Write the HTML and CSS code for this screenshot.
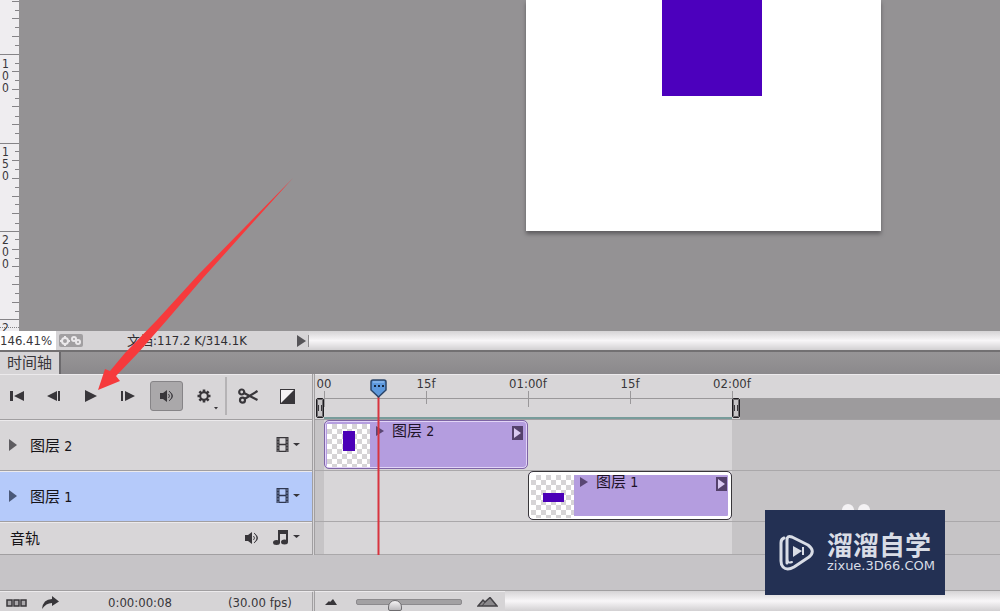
FILE: index.html
```
<!DOCTYPE html>
<html lang="zh-CN">
<head>
<meta charset="utf-8">
<title>时间轴</title>
<link rel="stylesheet" href="styles.css">
</head>
<body>
<main class="app">
  <section class="workspace">
    <svg class="v-ruler" width="19" height="331" viewBox="0 0 19 331" aria-hidden="true">
      <path class="tick" d="M0 54.500H19M0 143.500H19M0 231.500H19M0 319.500H19"/>
      <path class="tick" d="M12 1.500h7M12 18.500h7M12 36.500h7M12 71.500h7M12 89.500h7M12 106.500h7M12 124.500h7M12 160.500h7M12 178.500h7M12 196.500h7M12 213.500h7M12 249.500h7M12 266.500h7M12 284.500h7M12 302.500h7"/>
      <path class="tick" d="M15 10.500h4M15 27.500h4M15 45.500h4M15 63.500h4M15 80.500h4M15 98.500h4M15 116.500h4M15 133.500h4M15 151.500h4M15 169.500h4M15 187.500h4M15 204.500h4M15 223.500h4M15 239.500h4M15 258.500h4M15 276.500h4M15 293.500h4M15 311.500h4"/>
      <path class="dots" d="M0 327.500H19"/>
      <g class="ruler-text">
        <text x="2" y="68">1</text><text x="2" y="80">0</text><text x="2" y="92">0</text>
        <text x="2" y="156">1</text><text x="2" y="168">5</text><text x="2" y="180">0</text>
        <text x="2" y="244">2</text><text x="2" y="256">0</text><text x="2" y="268">0</text>
        <text x="2" y="332">2</text>
      </g>
    </svg>
    <div class="canvas">
      <div class="artboard"><div class="shape"></div></div>
    </div>
  </section>

  <div class="status">
    <input class="zoom-value" value="146.41%" aria-label="缩放">
    <svg class="status-icon" width="24" height="13" viewBox="0 0 24 13"><rect width="24" height="13" rx="2" fill="#a19fa1"/><circle cx="6" cy="7" r="3" fill="none" stroke="#ebe9eb" stroke-width="2"/><path d="M6 2v2M6 10v2M1 7h2M9 7h2" stroke="#ebe9eb" stroke-width="2"/><circle cx="15" cy="5" r="2" fill="none" stroke="#ebe9eb" stroke-width="2"/><circle cx="19" cy="8" r="2" fill="none" stroke="#ebe9eb" stroke-width="2"/></svg>
    <span class="doc-size">文档:117.2 K/314.1K</span>
    <button class="status-more" aria-label="状态选项"><svg width="9" height="12"><path d="M0 0L9 6L0 12Z" fill="#565458"/></svg></button>
    <div class="h-scroll"></div>
  </div>

  <nav class="tabs"><button class="tab">时间轴</button></nav>

  <section class="timeline">
    <div class="heads">
      <div class="toolbar">
        <button class="tool" aria-label="第一帧"><svg width="14" height="10"><path d="M0 0h3v10H0zM14 0v10L4 5z"/></svg></button>
        <button class="tool" aria-label="上一帧"><svg width="14" height="10"><path d="M10 0v10L0 5zM11 0h2v10h-2z"/></svg></button>
        <button class="tool" aria-label="播放"><svg width="12" height="12"><path d="M0 0L12 6L0 12z"/></svg></button>
        <button class="tool" aria-label="下一帧"><svg width="14" height="10"><path d="M0 0h2v10H0zM4 0L14 5L4 10z"/></svg></button>
        <button class="tool sound" aria-label="声音"><svg width="14" height="12" viewBox="0 0 14 12"><path d="M0 3h3l4-3v12L3 9H0z"/><path class="line" d="M8.500 4q2 2 0 4M10 2q4 4 0 8M9 1q7 5 0 10"/></svg></button>
        <button class="tool gear" aria-label="设置"><svg width="28" height="28" viewBox="0 0 28 28"><circle cx="14" cy="14" r="3.800" fill="none" stroke="#38363a" stroke-width="2"/><path d="M14 7.500v3M14 17.500v3M7.500 14h3M17.500 14h3M9.400 9.400l2 2M16.600 16.600l2 2M18.600 9.400l-2 2M11.400 16.600l-2 2" stroke="#38363a" stroke-width="2.600"/><path d="M24 25h4l-2 2.500z"/></svg></button>
        <i class="divider"></i>
        <button class="tool scissors" aria-label="拆分"><svg width="20" height="16" viewBox="0 0 20 16"><g fill="none" stroke="#38363a" stroke-width="2.200"><circle cx="3.700" cy="4" r="2.500"/><circle cx="4.500" cy="12.200" r="2.500"/><path d="M6 5l13.500 7M6.500 11L19.500 3"/></g></svg></button>
        <button class="tool fade" aria-label="过渡"><svg width="15" height="15"><rect x=".5" y=".5" width="14" height="14" fill="#f4f2f4" stroke="#38363a"/><path d="M15 0v15H0z"/></svg></button>
      </div>
      <div class="head">
        <svg class="twisty" width="9" height="12"><path d="M0 0L8 6L0 12Z" fill="#5e5c60"/></svg>
        <span class="name">图层 <b class="num">2</b></span>
        <button class="menu" aria-label="视频选项"><svg width="24" height="15" viewBox="0 0 24 15"><path d="M2 0v15M11 0v15" stroke="#38363a" stroke-width="3"/><path d="M2 1.500v13M11 1.500v13" stroke="#c9c7c9" stroke-dasharray="1 2"/><path d="M3 .5h7M3 7.500h7M3 14.500h7" stroke="#38363a" stroke-width="1.500"/><path d="M17 6h7l-3.500 3z"/></svg></button>
      </div>
      <div class="head selected">
        <svg class="twisty" width="9" height="12"><path d="M0 0L8 6L0 12Z" fill="#4a5878"/></svg>
        <span class="name">图层 <b class="num">1</b></span>
        <button class="menu" aria-label="视频选项"><svg width="24" height="15" viewBox="0 0 24 15"><path d="M2 0v15M11 0v15" stroke="#303850" stroke-width="3"/><path d="M2 1.500v13M11 1.500v13" stroke="#b5cafa" stroke-dasharray="1 2"/><path d="M3 .5h7M3 7.500h7M3 14.500h7" stroke="#303850" stroke-width="1.500"/><path d="M17 6h7l-3.500 3z"/></svg></button>
      </div>
      <div class="head audio">
        <span class="name">音轨</span>
        <button class="menu" aria-label="静音"><svg width="14" height="12" viewBox="0 0 14 12"><path d="M0 3h3l4-3v12L3 9H0z"/><path class="line" d="M8.500 4q2 2 0 4M10 2q4 4 0 8M9 1q7 5 0 10"/></svg></button>
        <button class="menu" aria-label="音频选项"><svg width="27" height="15" viewBox="0 0 27 15"><path d="M5 0h10v12h-2V4H7v9H5z"/><ellipse cx="3.500" cy="12.500" rx="3.500" ry="2.500"/><ellipse cx="11.500" cy="12" rx="3.500" ry="2.500"/><path d="M20 5h7l-3.500 3z"/></svg></button>
      </div>
    </div>

    <div class="tracks">
      <ol class="scale"><li>00</li><li class="half">15f</li><li>01:00f</li><li class="half">15f</li><li>02:00f</li></ol>
      <div class="work-area">
        <button class="handle" aria-label="工作区开始"></button>
        <div class="range"></div>
        <button class="handle" aria-label="工作区结束"></button>
        <div class="outside"></div>
      </div>
      <div class="track">
        <div class="clip first">
          <svg class="thumb" width="43" height="43"><defs><pattern id="checks" width="10" height="10" patternUnits="userSpaceOnUse"><rect width="10" height="10" fill="#fff"/><path d="M5 0h5v5H5zM0 5h5v5H0z" fill="#d6d4d6"/></pattern></defs><rect width="43" height="43" fill="url(#checks)"/><rect x="16" y="7" width="12" height="20" fill="#4b00b8"/></svg>
          <svg class="clip-twisty" width="8" height="10"><path d="M0 0L8 5L0 10Z" fill="#594673"/></svg>
          <span class="clip-name">图层 <b class="num">2</b></span>
          <svg class="clip-end" width="11" height="14"><rect width="11" height="14" fill="#54416c"/><path d="M2 2l7 5l-7 5z" fill="#d9c9f1"/></svg>
        </div>
      </div>
      <div class="track">
        <div class="clip second">
          <svg class="thumb" width="43" height="43"><rect width="43" height="43" fill="url(#checks)"/><rect x="12" y="18" width="21" height="9" fill="#4b00b8"/></svg>
          <svg class="clip-twisty" width="8" height="10"><path d="M0 0L8 5L0 10Z" fill="#594673"/></svg>
          <span class="clip-name">图层 <b class="num">1</b></span>
          <svg class="clip-end" width="11" height="14"><rect width="11" height="14" fill="#54416c"/><path d="M2 2l7 5l-7 5z" fill="#d9c9f1"/></svg>
        </div>
      </div>
      <div class="track audio"></div>
      <svg class="playhead" width="17" height="176" viewBox="0 0 17 176"><path d="M8.500 17V176" stroke="#d8343f" stroke-width="2"/><path d="M1 3Q1 1 3 1H14Q16 1 16 3V11L8.500 18L1 11Z" fill="#5d98dc" stroke="#2b4568" stroke-width="1.500"/><path d="M3 3h11" stroke="#9dc5f2"/><path d="M4 7h2M8 7h2M12 7h2" stroke="#15273f" stroke-width="2"/></svg>
    </div>
  </section>

  <div class="spare"></div>

  <footer class="bottom">
    <div class="controls">
      <button class="frames" aria-label="转换为帧动画"><svg width="21" height="8"><path d="M1 1h5v6H1zM8 1h5v6H8zM15 1h5v6h-5z" fill="#a9a7aa" stroke="#38363a" stroke-width="1.500"/></svg></button>
      <button class="render" aria-label="渲染视频"><svg width="17" height="13" viewBox="0 0 17 13"><path d="M0 13Q1 3 10 3V0L17 5.500L10 10V7Q4 7 0 13Z"/></svg></button>
      <span class="time">0:00:00:08</span>
      <span class="fps">(30.00 fps)</span>
    </div>
    <div class="zoom">
      <svg width="12" height="6"><path d="M0 6l4-4 1 1 3-3 4 6z"/></svg>
      <input class="slider" type="range" min="0" max="100" value="35" aria-label="时间轴缩放">
      <svg width="21" height="10"><path d="M1 9l5-6 2 2 5-4.500 7 8.500z" fill="#8b898c" stroke="#454347" stroke-width="1.500"/><path d="M5 9l4-5" stroke="#454347"/></svg>
    </div>
    <div class="h-scroll"></div>
  </footer>

  <svg class="pointer" width="200" height="216" viewBox="0 0 200 216" aria-hidden="true"><path d="M198 1L104 97L62 143L30 176L15 194L10 192L3 213L25 204L21 199L43 176L72 143L108 101Z" fill="#f63a3c"/></svg>

  <aside class="brand">
    <i class="bump"></i><i class="bump right"></i>
    <svg width="36" height="38" viewBox="0 0 36 38"><g fill="none" stroke="#d9dde6" stroke-width="3" stroke-linecap="round" stroke-linejoin="round"><path d="M8 29V6Q8 1 13 3L29 11Q37 17 30 23L15 33Q8 37 4 33Q2 31 2 27V9Q2 5 5 4"/><path d="M8 24Q8 30 13 28" stroke-width="2"/></g><path d="M14 12l9 5-9 6z" fill="#d9dde6"/><path d="M24 13v8" stroke="#d9dde6" stroke-width="2"/></svg>
    <div class="brand-text"><strong>溜溜自学</strong><span>zixue.3D66.COM</span></div>
  </aside>
</main>
</body>
</html>
```
FILE: styles.css
```
* { box-sizing: border-box; }

body {
  margin: 0;
  background: #c6c4c7;
  color: #38363a;
  font: 13px/16px "DejaVu Sans Condensed", "Noto Sans CJK SC", sans-serif;
}

button {
  padding: 0;
  border: 0;
  background: none;
  color: inherit;
  font: inherit;
}

svg { display: block; flex: none; fill: #38363a; }

.app {
  position: relative;
  display: flex;
  flex-direction: column;
  min-height: 100vh;
  overflow: hidden;
}

/* Document window */
.workspace { display: flex; flex: 1; min-height: 331px; background: #949294; }
.v-ruler { background: #efedf0; }
.tick { stroke: #858387; }
.dots { stroke: #858387; stroke-dasharray: 1 1; }
.ruler-text { font-size: 12px; fill: #38363a; }
.canvas { position: relative; flex: 1; overflow: hidden; }
.artboard {
  position: absolute;
  top: 0;
  left: 507px;
  width: 355px;
  height: 231px;
  background: #fff;
  box-shadow: 0 3px 4px #5f5d60;
}
.shape { width: 100px; height: 96px; margin-left: 136px; background: #4c00bd; }

/* Status bar */
.status {
  display: flex;
  align-items: center;
  height: 21px;
  border-bottom: 2px solid #727072;
  background: #d6d4d6;
}
.zoom-value {
  width: 56px;
  height: 19px;
  padding: 0;
  border: 0;
  background: #fff;
  color: #38363a;
  font: inherit;
}
.status-icon { margin-left: 3px; }
.doc-size { flex: none; width: 170px; margin-left: 44px; color: #2f2d31; }
.status-more { width: 12px; border-right: 1px solid #8e8c8e; }
.h-scroll {
  flex: 1;
  align-self: stretch;
  background: linear-gradient(#d5d3d5, #f8f6f8 50%, #d2d0d2);
}

/* Panel tabs */
.tabs { display: flex; height: 22px; background: linear-gradient(#979597, #8b898c); }
.tab {
  width: 61px;
  border-right: 2px solid #6c6a6d;
  background: #d6d4d6;
  font-size: 15px;
}

/* Timeline */
.timeline { display: flex; background: #d8d6d8; }
.heads { width: 315px; flex: none; border-right: 3px double #a19fa1; }
.toolbar {
  display: flex;
  align-items: center;
  gap: 7px;
  height: 46px;
  padding: 0 0 2px 2px;
  border-top: 1px solid #eceaec;
  border-bottom: 1px solid #a19fa1;
}
.tool { display: flex; align-items: center; justify-content: center; width: 30px; height: 30px; }
.tool.sound {
  width: 33px;
  border: 1px solid #868487;
  border-radius: 3px;
  background: #aaa8aa;
}
.tool.gear, .tool.scissors { width: 28px; }
.tool.fade { width: 36px; }
.line { fill: none; stroke: #454347; }
.divider { width: 2px; height: 38px; background: #b5b3b5; }
.head {
  display: flex;
  align-items: center;
  gap: 12px;
  height: 51px;
  padding: 0 12px 2px 9px;
  border-top: 1px solid #eceaec;
  border-bottom: 1px solid #a19fa1;
}
.head.selected { background: #b5cafa; color: #18204a; }
.head.audio { height: 33px; padding-left: 10px; gap: 14px; }
.name { flex: 1; padding-top: 2px; color: #151317; font-size: 15px; }
.num { font-size: 14px; font-weight: normal; }

.tracks {
  position: relative;
  flex: 1;
  min-width: 0;
  overflow: hidden;
  background: linear-gradient(90deg, #c6c4c6 9px, #d8d6d8 9px 417px, #c6c4c6 417px);
}
.scale {
  display: flex;
  height: 24px;
  margin: 0;
  padding: 1px 0 0;
  border-top: 1px solid #eceaec;
  background: #d8d6d8;
  list-style: none;
}
.scale li { position: relative; width: 102px; flex: none; text-align: center; }
.scale li:first-child { margin-left: -42px; }
.scale li::after {
  position: absolute;
  top: 15px;
  left: 51px;
  width: 1px;
  height: 16px;
  background: #9a989a;
  content: "";
}
.scale .half::after { height: 13px; }
.work-area { display: flex; height: 22px; padding-left: 1px; border-bottom: 1px solid #a19fa1; background: #d8d6d8; }
.handle {
  width: 8px;
  height: 20px;
  border: 1px solid #1c1a1e;
  border-radius: 2px;
  background: linear-gradient(90deg, #38363a 1px, #c6c4c6 1px 3px, #38363a 3px) center / 4px 6px no-repeat #c6c4c6;
  outline: 1px solid #6c6a6d;
  outline-offset: -2px;
  z-index: 1;
}
.range { width: 408px; border-top: 1px solid #9a989a; border-bottom: 2px solid #789c9b; }
.outside { flex: 1; background: #9d9b9d; }
.track {
  display: grid;
  grid-template-columns: 204px 204px;
  height: 51px;
  padding-left: 9px;
  border-bottom: 1px solid #aaa8aa;
}
.track.audio { height: 33px; }
.clip {
  display: flex;
  align-items: flex-start;
  height: 49px;
  padding: 2px;
  border: 1px solid #7e64a5;
  border-radius: 5px;
  background: #b49ddf;
  box-shadow: inset 0 0 0 1px #e2d5f7;
}
.clip.second {
  grid-column: 2;
  border-color: #38363a;
  box-shadow: inset 0 0 0 3px #fff;
}
.thumb { margin-top: 1px; }
.clip-twisty { margin: 3px 0 0 6px; }
.clip-name { flex: 1; margin-left: 8px; color: #1e1328; font-size: 15px; }
.clip-end { margin: 3px 2px 0 0; }
.playhead { position: absolute; top: 5px; left: 55px; }

.spare { height: 35px; background: #c6c4c7; }

/* Bottom bar */
.bottom { display: flex; height: 21px; border-top: 1px solid #a19fa1; background: #d6d4d6; }
.controls {
  display: flex;
  align-items: center;
  width: 315px;
  padding: 2px 0 0 6px;
  border-top: 1px solid #eceaec;
  border-right: 3px double #a19fa1;
}
.render { margin-left: 15px; }
.time { margin-left: 49px; }
.fps { margin-left: 56px; }
.zoom { display: flex; align-items: center; width: 190px; padding-left: 10px; gap: 16px; border-top: 1px solid #eceaec; }
.zoom .slider { margin: 0 -1px 0 3px; }
.slider { width: 106px; height: 14px; appearance: none; background: none; }
.slider::-webkit-slider-runnable-track {
  height: 6px;
  border: 1px solid #8c8a8d;
  border-radius: 2px;
  background: #a3a1a3;
}
.slider::-webkit-slider-thumb {
  width: 14px;
  height: 11px;
  appearance: none;
  background: linear-gradient(#f5f3f5, #bbb9bc);
  border: 1px solid #6f6d70;
  border-radius: 7px 7px 2px 2px;
}

/* Overlays */
.pointer { position: absolute; top: 177px; left: 95px; pointer-events: none; }
.brand {
  position: absolute;
  right: 55px;
  bottom: 16px;
  display: flex;
  align-items: center;
  gap: 12px;
  width: 180px;
  height: 85px;
  padding-left: 14px;
  background: #233053;
  color: #d9dde6;
}
.brand-text { display: flex; flex-direction: column; padding-bottom: 4px; }
.brand-text strong { font: 700 26px/30px "Noto Sans CJK SC", sans-serif; }
.brand-text span { font: 13px/14px "DejaVu Sans", sans-serif; }
.bump {
  position: absolute;
  top: -6px;
  left: 77px;
  width: 12px;
  height: 6px;
  border-radius: 6px 6px 0 0;
  background: #f4f2f4;
}
.bump.right { left: 93px; }
```
